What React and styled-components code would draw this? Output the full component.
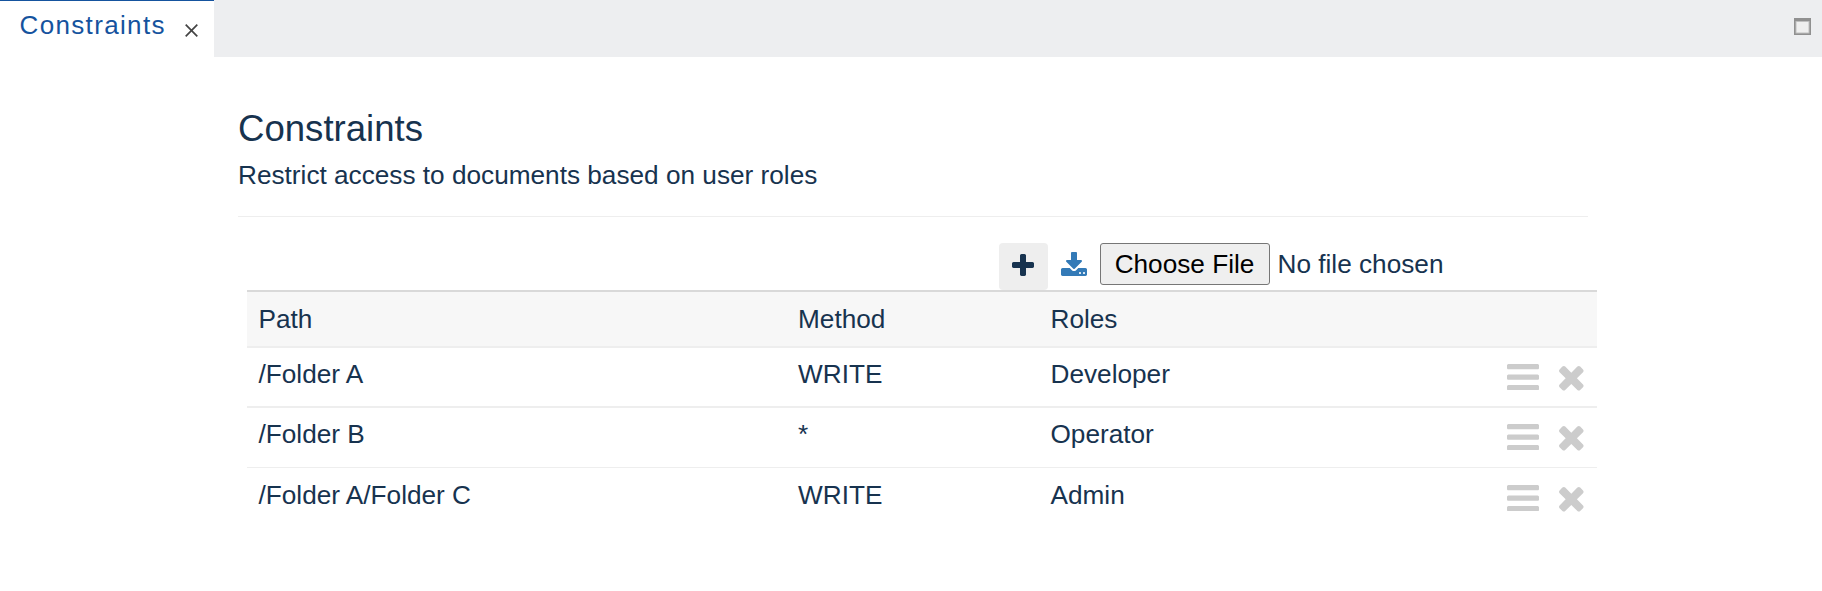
import React from "react";
import styled, { createGlobalStyle } from "styled-components";

const Global = createGlobalStyle`
  * { box-sizing: border-box; }
  body {
    margin: 0;
    background: #fff;
    color: #17334f;
    font: 26.2px/36px "Liberation Sans", Arial, sans-serif;
  }
`;

const TabBar = styled.header`
  display: flex;
  justify-content: space-between;
  height: 57px;
  background: #edeef0;
`;

const Tab = styled.div`
  display: flex;
  width: 214px;
  height: 57px;
  padding: 6px 0 0 19.5px;
  background: #fff;
  border-top: 1px solid #15539e;
  color: #15539e;
  font-size: 26px;
  letter-spacing: 1.35px;
`;

const TabLabel = styled.span`
  width: 165.5px;
  white-space: nowrap;
`;

const CloseIcon = styled.svg`
  width: 13px;
  height: 13px;
  margin-top: 17px;
`;

const MaximizeIcon = styled.svg`
  width: 17px;
  height: 17px;
  margin: 18px 11px 0 0;
`;

const Main = styled.main`
  width: 1350px;
  margin: 50px 0 0 238px;
`;

const Title = styled.h1`
  margin: 0;
  font-size: 36.6px;
  font-weight: 400;
  line-height: 44px;
`;

const Subtitle = styled.p`
  margin: 6px 0 0;
`;

const Divider = styled.hr`
  height: 1px;
  margin: 23px 0 26px;
  border: 0;
  background: #eee;
`;

const Toolbar = styled.div`
  display: flex;
  align-items: flex-start;
  height: 47px;
  padding-left: 761px;
`;

const AddButton = styled.button`
  display: flex;
  width: 49px;
  height: 47px;
  padding: 11px 0 0 13px;
  border: 0;
  border-radius: 4px;
  background: #eee;
  color: #17334f;
`;

const DownloadButton = styled.button`
  display: flex;
  width: 52px;
  height: 47px;
  padding: 9px 0 0 13px;
  border: 0;
  background: none;
  color: #337ab7;
`;

const FileButton = styled.button`
  width: 170px;
  height: 42px;
  padding: 0 1px 0 0;
  border: 1px solid #767676;
  border-radius: 3px;
  background: #efefef;
  color: #000;
  font: inherit;
`;

const FileName = styled.span`
  margin: 3px 0 0 7.5px;
  white-space: nowrap;
`;

const Icon = styled.svg`
  display: block;
  flex: none;
  width: ${(p) => p.$w}px;
  height: ${(p) => p.$h}px;
  fill: currentColor;
`;

const Table = styled.section`
  margin-left: 9px;
  width: 1350px;
`;

const Row = styled.div`
  display: grid;
  grid-template-columns: 539.5px 252.5px 456.5px 1fr;
  height: 60px;
  padding: ${(p) => p.$top}px 0 0 11.5px;
  border-bottom: ${(p) => p.$line}px solid #eee;
`;

const HeadRow = styled(Row)`
  height: 58px;
  border-top: 2px solid #d9d9d9;
  background: #f7f7f7;
`;

const Actions = styled.div`
  display: flex;
  gap: 20px;
  padding-top: 7.6px;
  color: #ccc;
`;

const DeleteIcon = styled(Icon)`
  margin-top: 2.4px;
`;

const BAR = "v128q0 26-19 45t-45 19h-1408q-26 0-45-19t-19-45v-128q0-26 19-45t45-19h1408q26 0 45 19t19 45z";

const rows = [
  { path: "/Folder A", method: "WRITE", roles: "Developer", top: 8, line: 2 },
  { path: "/Folder B", method: "*", roles: "Operator", top: 8, line: 1 },
  { path: "/Folder A/Folder C", method: "WRITE", roles: "Admin", top: 9, line: 0 },
];

export default function App() {
  return (
    <>
      <Global />
      <TabBar>
        <Tab>
          <TabLabel>Constraints</TabLabel>
          <CloseIcon viewBox="0 0 13 13">
            <path d="M.7.7l11.6 11.6M12.3.7L.7 12.3" stroke="#444" strokeWidth="1.7" />
          </CloseIcon>
        </Tab>
        <MaximizeIcon viewBox="0 0 17 17">
          <path d="M0 0h17v17H0z" fill="#909090" />
          <path d="M1.5 3h14v12.5h-14z" fill="#c0c0c0" />
          <path d="M2.5 4h12v10.500h-12z" fill="#efefef" />
        </MaximizeIcon>
      </TabBar>
      <Main>
        <Title>Constraints</Title>
        <Subtitle>Restrict access to documents based on user roles</Subtitle>
        <Divider />
        <Toolbar>
          <AddButton aria-label="Add">
            <Icon $w={22} $h={22} viewBox="192 128 1408 1408">
              <path d="M1600 736v192q0 40-28 68t-68 28h-416v416q0 40-28 68t-68 28h-192q-40 0-68-28t-28-68v-416h-416q-40 0-68-28t-28-68v-192q0-40 28-68t68-28h416v-416q0-40 28-68t68-28h192q40 0 68 28t28 68v416h416q40 0 68 28t28 68z" />
            </Icon>
          </AddButton>
          <DownloadButton aria-label="Download">
            <Icon $w={26} $h={24} viewBox="64 0 1664 1536">
              <path d="M1344 1344q0-26-19-45t-45-19-45 19-19 45 19 45 45 19 45-19 19-45zm256 0q0-26-19-45t-45-19-45 19-19 45 19 45 45 19 45-19 19-45zm128-224v320q0 40-28 68t-68 28h-1472q-40 0-68-28t-28-68v-320q0-40 28-68t68-28h465l135 136q58 56 136 56t136-56l136-136h464q40 0 68 28t28 68zm-325-569q17 41-14 70l-448 448q-18 19-45 19t-45-19l-448-448q-31-29-14-70 17-39 59-39h256v-448q0-26 19-45t45-19h256q26 0 45 19t19 45v448h256q42 0 59 39z" />
            </Icon>
          </DownloadButton>
          <FileButton>Choose File</FileButton>
          <FileName>No file chosen</FileName>
        </Toolbar>
        <Table>
          <HeadRow $top={9} $line={2}>
            <span>Path</span>
            <span>Method</span>
            <span>Roles</span>
          </HeadRow>
          {rows.map((row) => (
            <Row key={row.path} $top={row.top} $line={row.line}>
              <span>{row.path}</span>
              <span>{row.method}</span>
              <span>{row.roles}</span>
              <Actions>
                <Icon $w={32} $h={26.4} viewBox="128 256 1536 1280" preserveAspectRatio="none">
                  <path d={`M1664 1344${BAR}M1664 832${BAR}M1664 320${BAR}`} />
                </Icon>
                <DeleteIcon $w={24.6} $h={24.6} viewBox="302 366 1188 1188">
                  <path d="M1490 1322q0 40-28 68l-136 136q-28 28-68 28t-68-28l-294-294-294 294q-28 28-68 28t-68-28l-136-136q-28-28-28-68t28-68l294-294-294-294q-28-28-28-68t28-68l136-136q28-28 68-28t68 28l294 294 294-294q28-28 68-28t68 28l136 136q28 28 28 68t-28 68l-294 294 294 294q28 28 28 68z" />
                </DeleteIcon>
              </Actions>
            </Row>
          ))}
        </Table>
      </Main>
    </>
  );
}
